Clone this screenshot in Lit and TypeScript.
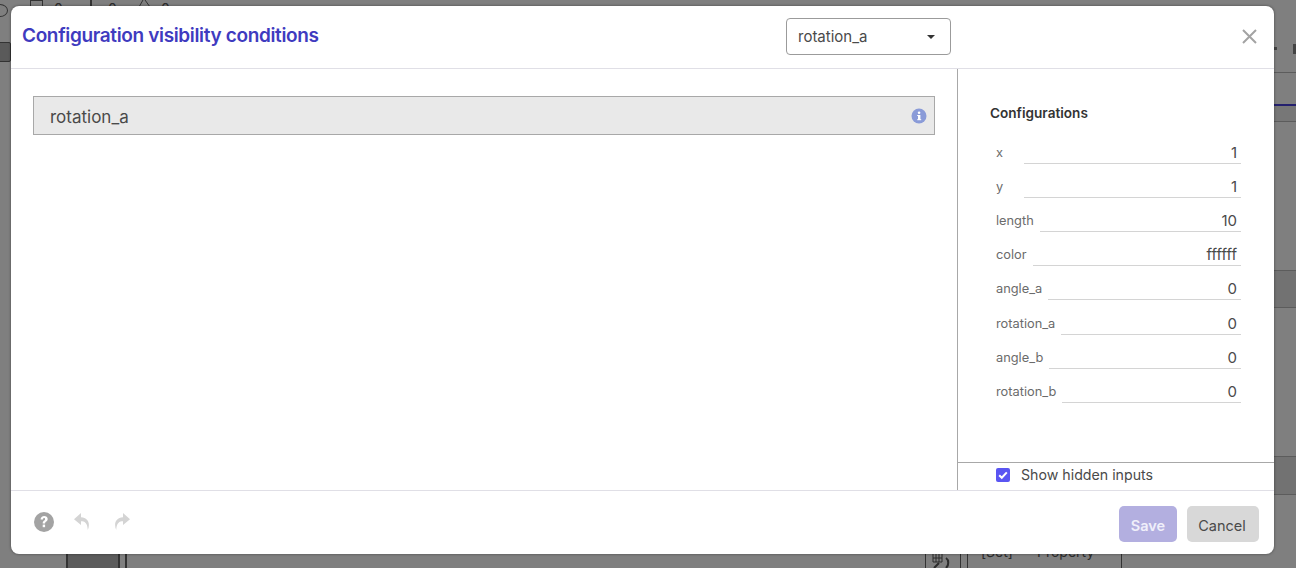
import { LitElement, html, css } from "lit";
import { customElement } from "lit/decorators.js";

const configs: [string, string][] = [
  ["x", "1"], ["y", "1"], ["length", "10"], ["color", "ffffff"],
  ["angle_a", "0"], ["rotation_a", "0"], ["angle_b", "0"], ["rotation_b", "0"],
];

@customElement("app-root")
export class AppRoot extends LitElement {
  static styles = css`
    :host { display: block; width: 1296px; height: 568px; position: relative; overflow: hidden; background: #7f7f7f; font-family: Inter, "Liberation Sans", sans-serif; color: #4a4a4a; }
    .bg { position: absolute; }
    .bg-dark { background: #727272; }
    .bg-line { background: #5c5c5c; }
    .bg-text { position: absolute; color: #2c2c2c; font-size: 14px; line-height: 16px; white-space: nowrap; }
    .dialog { position: absolute; left: 11px; top: 6px; width: 1263px; height: 548px; background: #fff; border-radius: 8px; display: flex; flex-direction: column; overflow: hidden; box-shadow: 0 0 3px rgba(0,0,0,.45); }
    .head { height: 63px; flex: none; box-sizing: border-box; border-bottom: 1px solid #e0dfe6; display: flex; align-items: flex-start; position: relative; }
    .title { margin: 16px 0 0 11px; font-size: 19px; line-height: 28px; font-weight: 600; color: #3f3bbf; letter-spacing: -0.35px; }
    .select { position: absolute; left: 775px; top: 12px; width: 165px; height: 37px; box-sizing: border-box; border: 1px solid #9b9b9b; border-radius: 4px; display: flex; align-items: center; justify-content: space-between; padding: 0 15px 0 11px; font-size: 15px; color: #4a4a4a; }
    .caret { width: 0; height: 0; border-left: 4px solid transparent; border-right: 4px solid transparent; border-top: 4px solid #333; }
    .close { position: absolute; left: 1231px; top: 23px; width: 15px; height: 15px; }
    .main { flex: 1; display: flex; min-height: 0; }
    .left { flex: 1; padding: 27px 22px 0; min-width: 0; }
    .var { height: 39px; box-sizing: border-box; border: 1px solid #a8a8a8; background: #e9e9e9; display: flex; align-items: center; justify-content: space-between; padding: 0 7px 0 16px; font-size: 17px; color: #4a4a4a; }
    .var span { padding-top: 2px; }
    .right { width: 317px; flex: none; box-sizing: border-box; border-left: 1px solid #a8a8a8; display: flex; flex-direction: column; }
    .cfg { flex: 1; padding: 34px 33px 0 32px; }
    .cfg h3 { margin: 0 0 7px; font-size: 13.6px; line-height: 20px; font-weight: 600; color: #333; }
    .row { display: flex; align-items: flex-end; height: 34.1px; padding-left: 6px; }
    .row label { min-width: 22px; font-size: 12.8px; line-height: 16px; color: #6b6b6b; margin-right: 6px; padding-bottom: 3px; white-space: nowrap; }
    .val { flex: 1; text-align: right; font-size: 15px; line-height: 20px; border-bottom: 1px solid #d4d4d4; padding-right: 4px; color: #4a4a4a; }
    .hidden { height: 28px; flex: none; box-sizing: border-box; border-top: 1px solid #a8a8a8; display: flex; align-items: center; padding: 0 0 4px 38px; font-size: 14.2px; color: #4a4a4a; gap: 11px; }
    .check { width: 14px; height: 14px; border-radius: 2px; background: #5a55f2; display: flex; align-items: center; justify-content: center; }
    .foot { height: 64px; flex: none; box-sizing: border-box; border-top: 1px solid #e0dfe6; display: flex; align-items: flex-start; justify-content: space-between; padding: 15px 15px 0 23px; }
    .tools { display: flex; align-items: flex-start; gap: 20px; }
    .help { margin-top: 6px; }
    .undo { margin-top: 7px; }
    .redo { margin: 7px 0 0 4px; }
    .btns { display: flex; gap: 10px; }
    .btn { height: 36px; box-sizing: border-box; border-radius: 5px; display: flex; align-items: center; justify-content: center; font-size: 14.5px; padding-top: 2px; }
    .save { width: 58px; background: #b3afe0; color: #f0effa; font-weight: 600; }
    .cancel { width: 72px; background: #d8d8d8; color: #4a4a4a; padding-right: 2px; }
  `;

  render() {
    return html`
      <div class="bg bg-line" style="left:1274px;top:72px;width:22px;height:1px"></div>
      <div class="bg" style="left:1274px;top:104px;width:22px;height:2px;background:#24206e"></div>
      <div class="bg" style="left:1274px;top:106px;width:22px;height:15px;background:#777"></div>
      <div class="bg bg-line" style="left:1274px;top:121px;width:22px;height:1px"></div>
      <div class="bg bg-dark" style="left:1274px;top:271px;width:22px;height:36px"></div>
      <div class="bg bg-line" style="left:1274px;top:270px;width:22px;height:1px"></div>
      <div class="bg bg-line" style="left:1274px;top:307px;width:22px;height:1px"></div>
      <div class="bg bg-dark" style="left:1274px;top:457px;width:22px;height:37px"></div>
      <div class="bg bg-line" style="left:1274px;top:456px;width:22px;height:1px"></div>
      <div class="bg bg-line" style="left:1274px;top:494px;width:22px;height:1px"></div>
      <div class="bg" style="left:1274px;top:47px;width:3px;height:3px;background:#444"></div>
      <div class="bg" style="left:1293px;top:44px;width:3px;height:10px;background:#444"></div>

      <div class="bg" style="left:-6px;top:42px;width:17px;height:20px;background:#5a5a5a;border:1px solid #333;box-sizing:border-box;border-radius:2px"></div>
      <div class="bg" style="left:-8px;top:4px;width:14px;height:11px;border:1px solid #333;border-radius:50%"></div>
      <div class="bg" style="left:30px;top:0;width:13px;height:7px;border:1px solid #333;box-sizing:border-box"></div>
      <div class="bg-text" style="left:54px;top:1px">0</div>
      <div class="bg" style="left:90px;top:0;width:2px;height:6px;background:#333"></div>
      <div class="bg-text" style="left:108px;top:1px">0</div>
      <svg class="bg" style="left:138px;top:0" width="14" height="7" viewBox="0 0 14 7" fill="none" stroke="#333"><path d="M1 7L5 0M7 0l5 7"/></svg>
      <div class="bg-text" style="left:161px;top:1px">0</div>

      <div class="bg" style="left:66px;top:554px;width:54px;height:14px;background:#5c5c5c;border-left:2px solid #333;border-right:2px solid #333;box-sizing:border-box"></div>
      <div class="bg" style="left:125px;top:554px;width:2px;height:14px;background:#333"></div>
      <div class="bg" style="left:925px;top:554px;width:1px;height:14px;background:#333"></div>
      <svg class="bg" style="left:932px;top:554px" width="22" height="14" viewBox="0 0 22 14" fill="none" stroke="#2c2c2c"><path d="M1 0v8h9V0M4 0v8M7 0v8M1 4h9"/><path d="M2 14l5-5M14 4c3 2 3 7 0 10" stroke-width="2"/></svg>
      <div class="bg" style="left:960px;top:554px;width:1px;height:14px;background:#333"></div>
      <div class="bg" style="left:967px;top:554px;width:1px;height:14px;background:#333"></div>
      <div class="bg" style="left:1121px;top:554px;width:1px;height:14px;background:#333"></div>
      <div class="bg-text" style="left:981px;top:544px">[Set]</div>
      <div class="bg-text" style="left:1037px;top:544px">Property</div>

      <div class="dialog">
        <div class="head">
          <div class="title">Configuration visibility conditions</div>
          <div class="select"><span>rotation_a</span><span class="caret"></span></div>
          <svg class="close" viewBox="0 0 15 15" fill="none" stroke="#a3a3a3" stroke-width="2"><path d="M1 1l13 13M14 1L1 14"/></svg>
        </div>
        <div class="main">
          <div class="left">
            <div class="var">
              <span>rotation_a</span>
              <svg width="16" height="16" viewBox="0 0 16 16"><circle cx="8" cy="8" r="7.5" fill="#8a9bd8"/><rect x="7" y="7" width="2.4" height="5" fill="#fff"/><rect x="6.2" y="7" width="2" height="1" fill="#fff"/><rect x="6.2" y="11.2" width="4" height="1" fill="#fff"/><circle cx="8.1" cy="4.8" r="1.3" fill="#fff"/></svg>
            </div>
          </div>
          <div class="right">
            <div class="cfg">
              <h3>Configurations</h3>
              ${configs.map(([k, v]) => html`<div class="row"><label>${k}</label><div class="val">${v}</div></div>`)}
            </div>
            <div class="hidden">
              <span class="check"><svg width="10" height="10" viewBox="0 0 10 10" fill="none" stroke="#fff" stroke-width="2"><path d="M1.2 5.2l2.6 2.6 5-5.4"/></svg></span>
              <span>Show hidden inputs</span>
            </div>
          </div>
        </div>
        <div class="foot">
          <div class="tools">
            <svg class="help" width="20" height="20" viewBox="0 0 20 20"><circle cx="10" cy="10" r="10" fill="#a3a3a3"/><path d="M6.6 7.6c0-2.2 1.6-3.5 3.6-3.500 1.900 0 3.500 1.200 3.500 3 0 2.500-2.600 2.400-2.600 4.400H8.700c0-3 2.400-2.900 2.400-4.300 0-.7-.4-1.100-1-1.100-.7 0-1.100.6-1.200 1.500z" fill="#fff"/><rect x="8.7" y="12.6" width="2.4" height="2.6" fill="#fff"/></svg>
            <svg class="undo" width="16" height="17" viewBox="0 0 16 17"><path d="M7 0L0 6.3 7 12V8.300c3.600 0 6.400 1.500 6.800 8.700 2.600-6.500.6-12.200-6.800-12.700z" fill="#d4d4d4"/></svg>
            <svg class="redo" width="16" height="17" viewBox="0 0 16 17"><path d="M9 0l7 6.300L9 12V8.300c-3.600 0-6.400 1.500-6.800 8.700C-.4 10.500 1.600 4.800 9 4.300z" fill="#d4d4d4"/></svg>
          </div>
          <div class="btns">
            <div class="btn save">Save</div>
            <div class="btn cancel">Cancel</div>
          </div>
        </div>
      </div>
    `;
  }
}
